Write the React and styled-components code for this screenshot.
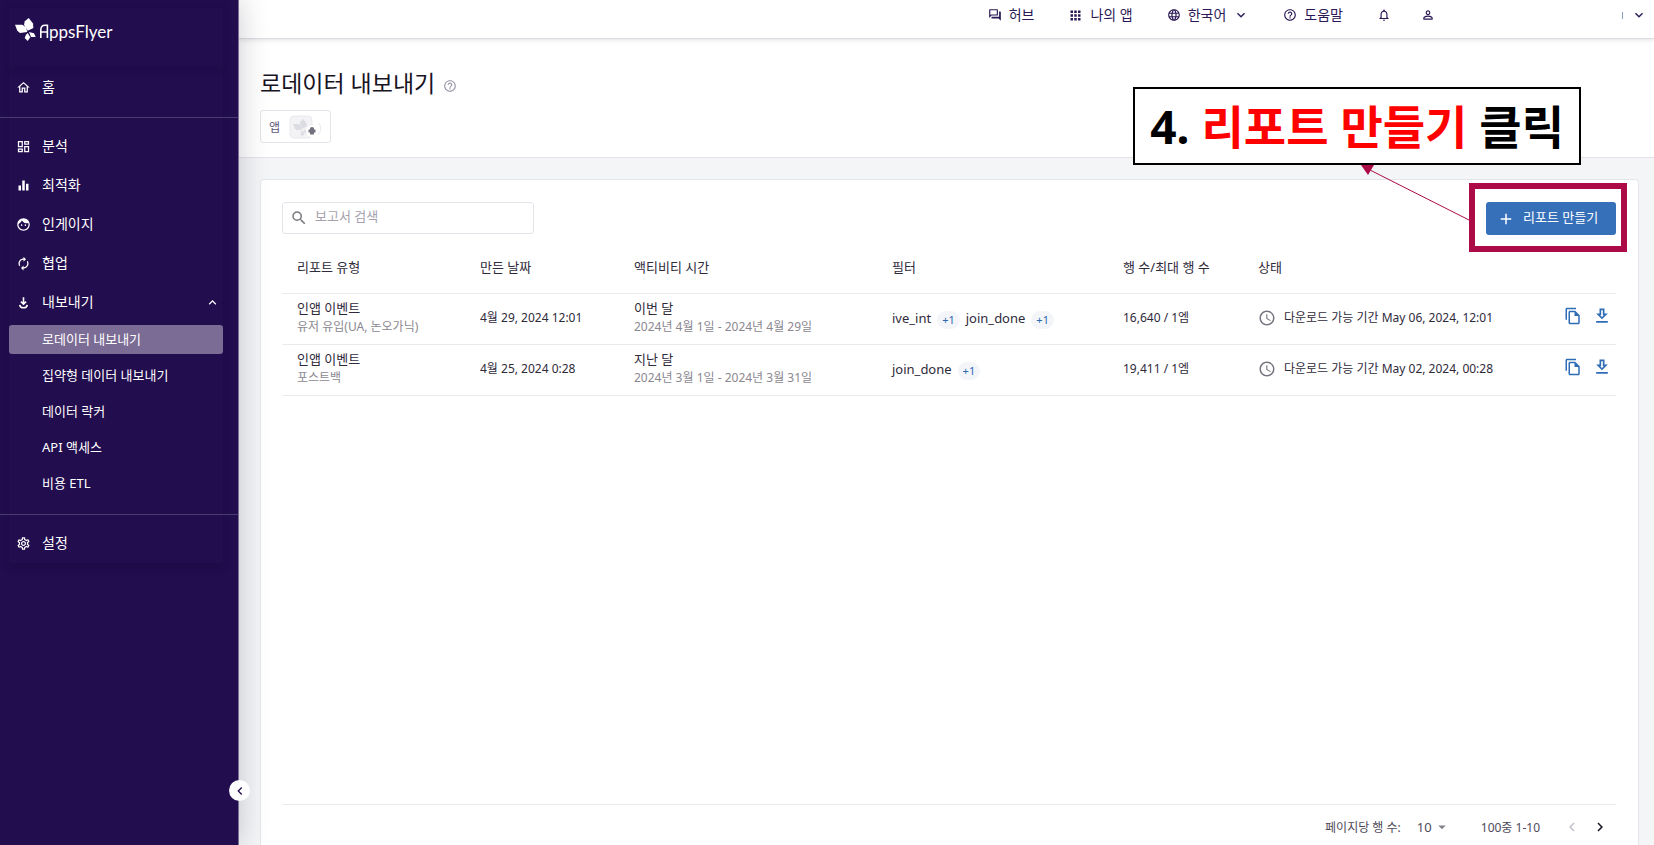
import React, { useState } from "react";
import styled, { createGlobalStyle, css } from "styled-components";
import {
    MdAccessTime,
    MdAdd,
    MdApps,
    MdArrowDropDown,
    MdAutorenew,
    MdEqualizer,
    MdFace,
    MdKeyboardArrowDown,
    MdKeyboardArrowLeft,
    MdKeyboardArrowRight,
    MdKeyboardArrowUp,
    MdLanguage,
    MdNotificationsNone,
    MdOutlineDashboard,
    MdOutlineDownload,
    MdOutlineFileCopy,
    MdOutlineHelpOutline,
    MdOutlineHome,
    MdOutlineQuestionAnswer,
    MdOutlineSettings,
    MdPermIdentity,
    MdSearch,
} from "react-icons/md";

const GlobalStyle = createGlobalStyle`
    * {
        box-sizing: border-box;
    }
    body {
        margin: 0;
        font-family: "Noto Sans", "Noto Sans CJK KR", sans-serif;
        font-size: 13px;
        color: #2f2a3a;
        background: #f4f5f7;
    }
    button, input, select {
        font: inherit;
        color: inherit;
    }
    a {
        color: inherit;
        text-decoration: none;
    }
    svg {
        flex-shrink: 0;
    }
`;

const Page = styled.div`
    display: flex;
    height: 100vh;
    overflow: hidden;
`;

/* ---------- sidebar ---------- */

const Sidebar = styled.aside`
    position: relative;
    z-index: 2;
    flex: 0 0 239px;
    padding: 8px 15px 0 9px;
    background: #220d4e;
    border-right: 1px solid #7a6d95;
    box-shadow: 0 0 28px rgba(20, 16, 40, 0.22);
    color: #fff;
`;

const Logo = styled.a`
    display: flex;
    height: 60px;
    padding: 10px 0 0 6px;
    box-shadow: 0 0 8px rgba(10, 0, 40, 0.25);
`;

const Menu = styled.nav`
    box-shadow: 0 4px 8px rgba(10, 0, 40, 0.25);
`;

const MenuItem = styled.a`
    display: flex;
    align-items: center;
    gap: 11px;
    height: 39px;
    padding: 0 3px 0 7px;
    font-size: 14px;

    .label {
        flex: 1;
        padding-bottom: 3px;
    }
`;

const Divider = styled.hr`
    height: 1px;
    margin: ${(props) => props.$before} -15px ${(props) => props.$after} -9px;
    border: none;
    background: #4b3b70;
`;

const SubMenu = styled.div`
    display: flex;
    flex-direction: column;
    gap: 7px;
    margin-top: 3px;
`;

const SubItem = styled.a`
    display: flex;
    align-items: center;
    height: 29px;
    padding: 0 0 2px 33px;
    border-radius: 3px;
    ${(props) =>
        props.$active &&
        css`
            background: #7b6c95;
        `}
`;

const Collapse = styled.button`
    position: absolute;
    right: -12px;
    bottom: 44px;
    display: flex;
    align-items: center;
    justify-content: center;
    width: 21px;
    height: 21px;
    padding: 0;
    border: none;
    border-radius: 50%;
    background: #fff;
    color: #220d4e;
    cursor: pointer;
`;

/* ---------- main ---------- */

const Main = styled.main`
    display: flex;
    flex-direction: column;
    flex: 1;
    min-width: 0;
`;

const TopBar = styled.header`
    position: relative;
    z-index: 1;
    display: flex;
    align-items: center;
    height: 39px;
    padding: 0 7px 8px 0;
    background: #fff;
    border-bottom: 1px solid #dcdce2;
    box-shadow: 0 1px 5px rgba(0, 0, 0, 0.12);
    color: #2b1956;
`;

const TopItem = styled.button`
    display: flex;
    align-items: center;
    gap: 7px;
    padding: 0;
    border: none;
    background: none;
    cursor: pointer;

    .label {
        padding-bottom: 3px;
        font-size: 14px;
    }
`;

const TopLinks = styled.div`
    display: flex;
    align-items: center;
    gap: 34px;
    margin-left: auto;
    margin-right: 187px;
`;

const TopIcons = styled.div`
    display: flex;
    gap: 30px;
`;

const Account = styled(TopItem)`
    gap: 8px;

    &::before {
        content: "";
        width: 1px;
        height: 7px;
        background: #8d9cc4;
    }
`;

const PageHead = styled.section`
    height: 119px;
    padding: 24px 21px 0;
    background: #fff;
    border-bottom: 1px solid #e3e4e9;
`;

const Title = styled.h1`
    display: flex;
    align-items: center;
    gap: 8px;
    height: 38px;
    margin: 0 0 9px;
    font-size: 23px;
    font-weight: 400;
    color: #17131f;

    svg {
        margin-top: 8px;
        color: #9a96a8;
    }
`;

const AppFilter = styled.button`
    display: flex;
    align-items: center;
    gap: 9px;
    width: 71px;
    height: 33px;
    padding: 0 8px;
    border: 1px solid #e3e4ea;
    border-radius: 3px;
    background: #fff;
    font-size: 12px;
    color: #5d5675;
    cursor: pointer;
`;

const Card = styled.section`
    display: flex;
    flex-direction: column;
    flex: 1;
    margin: 21px 15px 0 21px;
    padding: 22px 22px 0 21px;
    border: 1px solid #e6e7ec;
    border-bottom: none;
    border-radius: 4px 4px 0 0;
    background: #fff;
`;

const Toolbar = styled.div`
    display: flex;
    justify-content: space-between;
`;

const SearchBox = styled.label`
    display: flex;
    align-items: center;
    gap: 7px;
    width: 252px;
    height: 32px;
    padding: 0 7px;
    border: 1px solid #e3e4ea;
    border-radius: 3px;
    color: #7a7a80;

    input {
        width: 100%;
        min-width: 0;
        padding: 0 0 4px;
        border: none;
        outline: none;
        background: none;
        color: #2f2a3a;
    }
    input::placeholder {
        color: #a5a1ae;
    }
`;

const CreateWrap = styled.div`
    position: relative;
`;

const CreateButton = styled.button`
    display: flex;
    align-items: center;
    gap: 8px;
    height: 33px;
    padding: 0 14px 0 11px;
    border: none;
    border-radius: 3px;
    background: #3670b9;
    color: #fff;
    text-align: left;
    white-space: nowrap;
    cursor: pointer;

    .label {
        min-width: 79px;
        padding-bottom: 4px;
    }
`;

/* guide marks that lie over the page */
const Marker = styled.div`
    position: absolute;
    inset: -19px -11px -17px -17px;
    border: 6px solid #ad0b48;
    pointer-events: none;
`;

const Callout = styled.p`
    position: absolute;
    z-index: 1;
    right: 35px;
    bottom: 70px;
    height: 78px;
    margin: 0;
    padding: 0 15px;
    border: 2px solid #000;
    background: #fff;
    font-size: 46px;
    font-weight: 700;
    line-height: 74px;
    white-space: nowrap;
    color: #000;

    em {
        font-style: normal;
        color: #f00;
    }
`;

const Arrow = styled.svg`
    position: absolute;
    right: 147px;
    top: -37px;
    pointer-events: none;
`;

const Table = styled.table`
    width: 100%;
    margin-top: 6px;
    border-collapse: collapse;
    table-layout: fixed;

    th {
        height: 52px;
        padding: 0 0 1px 15px;
        font-weight: 400;
        text-align: left;
    }
    td {
        height: 51px;
        padding: 0 0 1px 15px;
        line-height: 18px;
        white-space: nowrap;
    }
    tr {
        border-bottom: 1px solid #e9eaee;
    }
    small {
        display: block;
        font-size: 12px;
        line-height: 20px;
        color: #8b8891;
    }
`;

const SmallCell = styled.td`
    font-size: 12px;
`;

const Inline = styled.div`
    display: flex;
    align-items: center;
    gap: ${(props) => props.$gap};
`;

const Actions = styled(Inline)`
    justify-content: flex-end;
    padding: 0 4px 5px 0;
`;

const More = styled.button`
    height: 18px;
    margin-top: 4px;
    padding: 0 5px;
    border: none;
    border-radius: 9px;
    background: #f3f5f8;
    color: #2c69b3;
    font-size: 11px;
    line-height: 18px;
`;

const IconButton = styled.button`
    display: flex;
    padding: 0;
    border: none;
    background: none;
    color: ${(props) => props.$color || "#2f6cb6"};
    cursor: pointer;
`;

const Footer = styled.footer`
    display: flex;
    align-items: center;
    justify-content: flex-end;
    height: 41px;
    margin-top: auto;
    padding: 4px 7px 0 0;
    border-top: 1px solid #e9eaee;
    font-size: 12px;
    color: #4e4a58;
`;

const PageSize = styled.label`
    display: flex;
    align-items: center;
    gap: 16px;
    margin-right: 30px;

    span {
        position: relative;
        display: flex;
        align-items: center;
    }
    select {
        width: 34px;
        padding: 0;
        border: none;
        background: none;
        font-size: 13px;
        appearance: none;
    }
    svg {
        position: absolute;
        right: 0;
        color: #85828c;
        pointer-events: none;
    }
`;

const Pager = styled(Inline)`
    margin-left: 23px;
`;

const menu = [
    { label: "분석", icon: MdOutlineDashboard },
    { label: "최적화", icon: MdEqualizer },
    { label: "인게이지", icon: MdFace },
    { label: "협업", icon: MdAutorenew },
];

const exportMenu = ["로데이터 내보내기", "집약형 데이터 내보내기", "데이터 락커", "API 액세스", "비용 ETL"];

const columns = [
    { label: "리포트 유형", width: "183px" },
    { label: "만든 날짜", width: "154px" },
    { label: "액티비티 시간", width: "258px" },
    { label: "필터", width: "231px" },
    { label: "행 수/최대 행 수", width: "135px" },
    { label: "상태", width: "auto" },
    { label: "", width: "90px" },
];

const reports = [
    {
        type: "인앱 이벤트",
        sub: "유저 유입(UA, 논오가닉)",
        created: "4월 29, 2024 12:01",
        period: "이번 달",
        range: "2024년 4월 1일 - 2024년 4월 29일",
        filters: ["ive_int", "join_done"],
        rows: "16,640 / 1엠",
        status: "다운로드 가능 기간 May 06, 2024, 12:01",
    },
    {
        type: "인앱 이벤트",
        sub: "포스트백",
        created: "4월 25, 2024 0:28",
        period: "지난 달",
        range: "2024년 3월 1일 - 2024년 3월 31일",
        filters: ["join_done"],
        rows: "19,411 / 1엠",
        status: "다운로드 가능 기간 May 02, 2024, 00:28",
    },
];

const Petals = () => (
    <>
        <path d="M13.700 0l4.300 5.500.4 4.500-5.700 2.700L9 6.700l.8-3.400z" />
        <path d="M0 6.700h7.300l3.700 2.600 1.300 4.700-7.300 1-2.700-2.300z" />
        <path d="M14 14l5 1.300 1.700 3.700H16z" />
        <path d="M12.700 15l2.600 4.300-2.600 3.700-3-3 1.300-3.300z" />
    </>
);

const BrandLogo = () => (
    <svg width="100" height="28" viewBox="0 0 100 28" fill="#fff" role="img" aria-label="AppsFlyer">
        <Petals />
        <path d="M25.800 20v-8q0-4.800 4.200-4.800h2.400V20M25.800 14h6.600" fill="none" stroke="#fff" strokeWidth="1.600" />
        <text x="34" y="20" fontFamily="Lato, sans-serif" fontSize="17">
            ppsFlyer
        </text>
    </svg>
);

const ExportIcon = () => (
    <svg width="15" height="15" viewBox="0 0 14 14" fill="none" stroke="currentColor" strokeWidth="1.500">
        <path d="M7 2v6M4.600 6.200L7 8.600l2.400-2.400M3.500 9.200c.4 3.600 6.600 3.600 7 0" />
    </svg>
);

const AppIcon = () => (
    <svg width="34" height="24" viewBox="0 0 34 24">
        <rect x="1" y="1" width="22" height="22" rx="4" fill="#f3f3f6" stroke="#e8e8ed" />
        <g fill="#dcdce3" transform="translate(4 4) scale(.75)">
            <Petals />
        </g>
        <circle cx="23" cy="16" r="6" fill="#fff" />
        <path d="M30 8q4 6-1 12" fill="none" stroke="#ececf0" />
        <path d="M19.500 14.500h7v3h-7zM21 13q2-2 4 0v6.500h-4z" fill="#75717e" />
    </svg>
);

export default function App() {
    const [active, setActive] = useState(exportMenu[0]);

    return (
        <>
            <GlobalStyle />
            <Page>
                <Sidebar>
                    <Logo href="#">
                        <BrandLogo />
                    </Logo>
                    <Menu>
                        <MenuItem href="#">
                            <MdOutlineHome size={15} />
                            <span className="label">홈</span>
                        </MenuItem>
                        <Divider $before="10px" $after="9px" />
                        {menu.map(({ label, icon: Icon }) => (
                            <MenuItem href="#" key={label}>
                                <Icon size={15} />
                                <span className="label">{label}</span>
                            </MenuItem>
                        ))}
                        <MenuItem href="#">
                            <ExportIcon />
                            <span className="label">내보내기</span>
                            <MdKeyboardArrowUp size={15} />
                        </MenuItem>
                        <SubMenu>
                            {exportMenu.map((label) => (
                                <SubItem href="#" key={label} $active={label === active} onClick={() => setActive(label)}>
                                    {label}
                                </SubItem>
                            ))}
                        </SubMenu>
                        <Divider $before="16px" $after="9px" />
                        <MenuItem href="#">
                            <MdOutlineSettings size={15} />
                            <span className="label">설정</span>
                        </MenuItem>
                    </Menu>
                    <Collapse aria-label="메뉴 접기">
                        <MdKeyboardArrowLeft size={16} />
                    </Collapse>
                </Sidebar>

                <Main>
                    <TopBar>
                        <TopLinks>
                            <TopItem>
                                <MdOutlineQuestionAnswer size={14} />
                                <span className="label">허브</span>
                            </TopItem>
                            <TopItem>
                                <MdApps size={15} />
                                <span className="label">나의 앱</span>
                            </TopItem>
                            <TopItem>
                                <MdLanguage size={14} />
                                <span className="label">한국어</span>
                                <MdKeyboardArrowDown size={16} />
                            </TopItem>
                            <TopItem>
                                <MdOutlineHelpOutline size={14} />
                                <span className="label">도움말</span>
                            </TopItem>
                            <TopIcons>
                                <TopItem aria-label="알림">
                                    <MdNotificationsNone size={14} />
                                </TopItem>
                                <TopItem aria-label="프로필">
                                    <MdPermIdentity size={14} />
                                </TopItem>
                            </TopIcons>
                        </TopLinks>
                        <Account aria-label="계정">
                            <MdKeyboardArrowDown size={16} />
                        </Account>
                    </TopBar>

                    <PageHead>
                        <Title>
                            로데이터 내보내기
                            <MdOutlineHelpOutline size={14} />
                        </Title>
                        <AppFilter>
                            앱
                            <AppIcon />
                        </AppFilter>
                    </PageHead>

                    <Card>
                        <Toolbar>
                            <SearchBox>
                                <MdSearch size={18} />
                                <input type="text" placeholder="보고서 검색" aria-label="보고서 검색" />
                            </SearchBox>
                            <CreateWrap>
                                <CreateButton>
                                    <MdAdd size={18} />
                                    <span className="label">리포트 만들기</span>
                                </CreateButton>
                                <Marker />
                                <Arrow width="108" height="56" viewBox="0 0 108 56">
                                    <path d="M7 4L108 55" stroke="#ad0b48" />
                                    <path d="M0 0h13L7 10z" fill="#ad0b48" />
                                </Arrow>
                                <Callout>
                                    4. <em>리포트 만들기</em> 클릭
                                </Callout>
                            </CreateWrap>
                        </Toolbar>

                        <Table>
                            <colgroup>
                                {columns.map((col) => (
                                    <col key={col.label} width={col.width} />
                                ))}
                            </colgroup>
                            <thead>
                                <tr>
                                    {columns.map((col) => (
                                        <th key={col.label}>{col.label}</th>
                                    ))}
                                </tr>
                            </thead>
                            <tbody>
                                {reports.map((el) => (
                                    <tr key={el.created}>
                                        <td>
                                            {el.type}
                                            <small>{el.sub}</small>
                                        </td>
                                        <SmallCell>{el.created}</SmallCell>
                                        <td>
                                            {el.period}
                                            <small>{el.range}</small>
                                        </td>
                                        <td>
                                            <Inline $gap="6px">
                                                {el.filters.map((name) => (
                                                    <React.Fragment key={name}>
                                                        {name}
                                                        <More>+1</More>
                                                    </React.Fragment>
                                                ))}
                                            </Inline>
                                        </td>
                                        <SmallCell>{el.rows}</SmallCell>
                                        <SmallCell>
                                            <Inline $gap="8px">
                                                <MdAccessTime size={18} color="#77747f" />
                                                {el.status}
                                            </Inline>
                                        </SmallCell>
                                        <td>
                                            <Actions $gap="10px">
                                                <IconButton aria-label="복사">
                                                    <MdOutlineFileCopy size={18} />
                                                </IconButton>
                                                <IconButton aria-label="다운로드">
                                                    <MdOutlineDownload size={20} />
                                                </IconButton>
                                            </Actions>
                                        </td>
                                    </tr>
                                ))}
                            </tbody>
                        </Table>

                        <Footer>
                            <PageSize>
                                페이지당 행 수:
                                <span>
                                    <select defaultValue="10">
                                        <option>10</option>
                                        <option>25</option>
                                    </select>
                                    <MdArrowDropDown size={18} />
                                </span>
                            </PageSize>
                            100중 1-10
                            <Pager $gap="10px">
                                <IconButton aria-label="이전" $color="#c2c0c8">
                                    <MdKeyboardArrowLeft size={18} />
                                </IconButton>
                                <IconButton aria-label="다음" $color="#1b1626">
                                    <MdKeyboardArrowRight size={18} />
                                </IconButton>
                            </Pager>
                        </Footer>
                    </Card>
                </Main>
            </Page>
        </>
    );
}
